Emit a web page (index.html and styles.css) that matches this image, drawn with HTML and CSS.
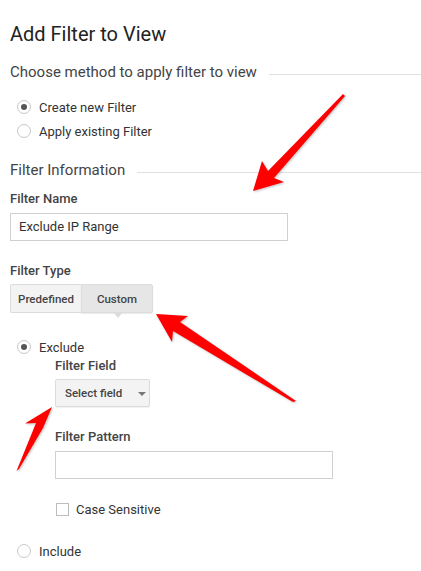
FILE: index.html
```html
<!DOCTYPE html>
<html>
<head>
<meta charset="utf-8">
<link rel="stylesheet" href="styles.css">
</head>
<body>
<div class="page">
  <h1 class="title">Add Filter to View</h1>

  <div class="section-head s1"><span class="section-text">Choose method to apply filter to view</span><span class="rule"></span></div>
  <div class="radio-list">
    <div class="radio checked"><span class="circle"></span><span>Create new Filter</span></div>
    <div class="radio"><span class="circle"></span><span>Apply existing Filter</span></div>
  </div>

  <div class="section-head s2"><span class="section-text">Filter Information</span><span class="rule"></span></div>
  <div class="label name-label">Filter Name</div>
  <div class="input name-input">Exclude IP Range</div>

  <div class="label type-label">Filter Type</div>
  <div class="btn-group">
    <span class="seg">Predefined</span>
    <span class="seg active">Custom</span>
  </div>

  <div class="radio exclude checked"><span class="circle"></span><span>Exclude</span></div>
  <div class="sub">
    <div class="label sub-label">Filter Field</div>
    <div class="select"><span>Select field</span><span class="caret"></span></div>
    <div class="label pattern-label">Filter Pattern</div>
    <div class="input pattern-input"></div>
    <div class="check-row"><span class="box"></span><span>Case Sensitive</span></div>
  </div>
  <div class="radio include"><span class="circle"></span><span>Include</span></div>
</div>

<svg class="arrows" width="421" height="571" viewBox="0 0 421 571">
  <polygon points="343,94 345,96 274,178 284,182 253,191 262,161 268,171"/>
  <polygon points="156,314 188,316 180,322 296,401 293,402 173,331 172,342"/>
  <polygon points="52,407 25,423.5 36,423 16.5,471 19,469 43,428"/>
</svg>
</body>
</html>
```

FILE: styles.css
```css
* { box-sizing: border-box; }
html, body { margin: 0; padding: 0; background: #fff; }
body {
  font-family: Roboto, "Liberation Sans", sans-serif;
  color: #333;
  width: 421px;
  height: 571px;
  overflow: hidden;
  position: relative;
}
.page { padding-left: 10px; }

.title {
  margin: 22px 0 0;
  font-size: 20px;
  line-height: 24px;
  font-weight: 400;
  color: #222;
}

.section-head {
  display: flex;
  align-items: center;
  height: 20px;
  font-size: 15px;
  color: #444;
}
.section-head.s1 { margin-top: 16px; }
.section-head.s2 { margin-top: 19px; }
.section-text { white-space: nowrap; }
.rule {
  flex: 1;
  height: 1px;
  background: #e0e0e0;
  margin-left: 12px;
  margin-top: 4px;
}

.radio-list {
  margin-top: 15px;
  display: flex;
  flex-direction: column;
  gap: 4px;
}
.radio {
  display: flex;
  align-items: center;
  height: 20px;
  font-size: 13px;
  color: #333;
  gap: 8px;
}
.circle {
  width: 14px;
  height: 14px;
  border: 1px solid #c8c8c8;
  border-radius: 50%;
  margin-left: 7px;
  display: flex;
  align-items: center;
  justify-content: center;
}
.radio.checked .circle::after {
  content: "";
  width: 6px;
  height: 6px;
  border-radius: 50%;
  background: #555;
}

.label {
  font-size: 13px;
  font-weight: 500;
  color: #444;
}
.name-label { margin-top: 9px; line-height: 20px; }
.type-label { margin-top: 20px; line-height: 20px; }

.input {
  width: 278px;
  height: 28px;
  border: 1px solid #d0d0d0;
  font-size: 13px;
  line-height: 26px;
  padding-left: 8px;
  color: #333;
}
.name-input { margin-top: 4px; }

.btn-group {
  margin-top: 3px;
  display: flex;
  width: 143px;
  height: 29px;
  position: relative;
}
.seg {
  display: flex;
  align-items: center;
  justify-content: center;
  font-size: 11.5px;
  font-weight: 500;
  color: #444;
  border: 1px solid #dcdcdc;
  background: #f3f3f3;
}
.seg:first-child { width: 71px; border-radius: 2px 0 0 2px; border-right: none; }
.seg.active {
  width: 72px;
  background: #e6e6e6;
  border-radius: 0 2px 2px 0;
  box-shadow: 0 1px 1px rgba(0,0,0,0.08);
  position: relative;
}
.seg.active::after {
  content: "";
  position: absolute;
  left: 31px;
  bottom: -6px;
  width: 0;
  height: 0;
  border-left: 5px solid transparent;
  border-right: 5px solid transparent;
  border-top: 6px solid #dcdcdc;
}

.radio.exclude { margin-top: 24px; }

.sub { padding-left: 45px; }
.sub-label { line-height: 18px; }
.select {
  margin-top: 4px;
  width: 95px;
  height: 28px;
  border: 1px solid #dcdcdc;
  border-radius: 2px;
  background: #f3f3f3;
  display: flex;
  align-items: center;
  padding-left: 9px;
  font-size: 11.5px;
  font-weight: 500;
  color: #444;
  box-shadow: 0 1px 1px rgba(0,0,0,0.06);
}
.caret {
  margin-left: 16px;
  width: 0;
  height: 0;
  border-left: 4px solid transparent;
  border-right: 4px solid transparent;
  border-top: 4px solid #777;
  margin-top: 2px;
}
.pattern-label { margin-top: 21px; line-height: 18px; }
.pattern-input { margin-top: 5px; }

.check-row {
  margin-top: 20px;
  height: 20px;
  display: flex;
  align-items: center;
  gap: 7px;
  font-size: 13px;
  color: #333;
}
.box {
  width: 13px;
  height: 13px;
  border: 1px solid #bdbdbd;
  margin-left: 1px;
}

.radio.include { margin-top: 22px; }

.arrows {
  position: absolute;
  left: 0;
  top: 0;
  pointer-events: none;
}
.arrows polygon {
  fill: #ff0000;
  filter: drop-shadow(1px 1px 1px rgba(0,0,0,0.25));
}
```
